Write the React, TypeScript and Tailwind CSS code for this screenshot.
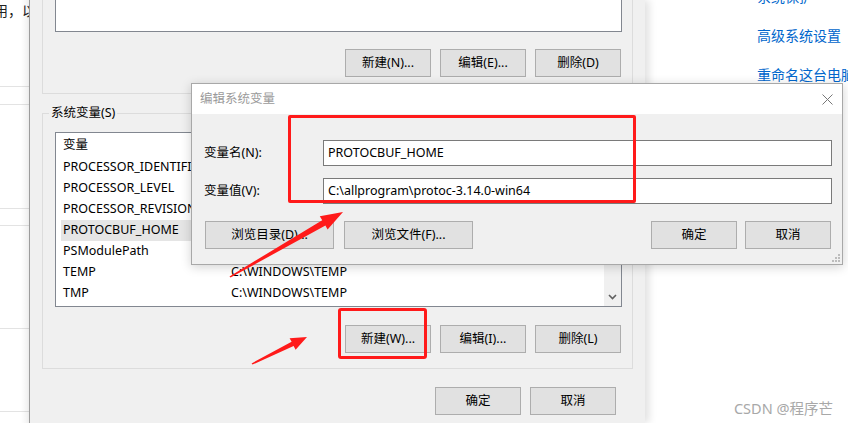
import React from "react";

const font = "font-['Noto_Sans','Noto_Sans_CJK_SC',sans-serif]";

const Btn = ({ w, children }: { w: string; children: React.ReactNode }) => (
  <button
    type="button"
    className={`${w} h-[28px] flex items-center justify-center border border-[#adadad] bg-[#e1e1e1] text-[12.5px] leading-none text-black`}
  >
    {children}
  </button>
);

const rows: [string, string][] = [
  ["PROCESSOR_IDENTIFIER", "Intel64 Family 6 Model 158 Stepping 10, GenuineIntel"],
  ["PROCESSOR_LEVEL", "6"],
  ["PROCESSOR_REVISION", "9e0a"],
  ["PROTOCBUF_HOME", "C:\\allprogram\\protoc-3.14.0-win64"],
  ["PSModulePath", "%ProgramFiles%\\WindowsPowerShell\\Modules"],
  ["TEMP", "C:\\WINDOWS\\TEMP"],
  ["TMP", "C:\\WINDOWS\\TEMP"],
];

const LeftStrip = () => (
  <div className="w-[29px] shrink-0 overflow-hidden bg-white relative">
    <div className="h-[86px] border-b border-[#e3e3e3]">
      <div className="ml-[-20px] mt-[1px] whitespace-nowrap text-[14px] leading-[20px] text-[#222]">使用，以及</div>
    </div>
    <div className="h-[18px] border-b border-[#e3e3e3]" />
    <div className="h-[104px] border-b border-[#e3e3e3]" />
    <div className="h-[17px] border-b border-[#e3e3e3]" />
    <div className="h-[103px] border-b border-[#e3e3e3]" />
    <div className="h-[83px] border-b border-[#e3e3e3]" />
    <div className="absolute inset-y-0 right-0 w-[8px] bg-gradient-to-r from-transparent to-[rgba(0,0,0,0.06)]" />
  </div>
);

const EnvDialog = () => (
  <div className="w-[616px] shrink-0 border-l border-[#9c9c9c] bg-[#f0f0f0] relative z-10 shadow-[4px_0_8px_rgba(0,0,0,0.12)] flex flex-col">
    {/* user variables (cut off at top) */}
    <div className="ml-[12px] w-[591px] h-[94px] border-x border-b border-[#dcdcdc] flex flex-col">
      <div className="ml-[12px] w-[567px] h-[32px] bg-white border-x border-b border-[#828790]" />
      <div className="mt-[17px] flex justify-end gap-[9px] pr-[11px]">
        <Btn w="w-[86px]">新建(N)...</Btn>
        <Btn w="w-[86px]">编辑(E)...</Btn>
        <Btn w="w-[86px]">删除(D)</Btn>
      </div>
    </div>

    {/* system variables */}
    <div className="mt-[19px] ml-[12px] w-[591px] h-[256px] border border-[#dcdcdc] relative flex flex-col">
      <div className="absolute -top-[10px] left-[6px] bg-[#f0f0f0] px-[2px] text-[12.5px] leading-[18px] text-black">系统变量(S)</div>
      <div className="mt-[18px] ml-[12px] w-[567px] h-[175px] bg-white border border-[#828790] flex">
        <div className="flex-1 flex flex-col text-[12.5px] text-black overflow-hidden">
          <div className="h-[24px] flex items-center pl-[7px] shrink-0">
            <div className="w-[168px]">变量</div>
            <div>值</div>
          </div>
          {rows.map(([k, v]) => (
            <div
              key={k}
              className={`h-[21px] shrink-0 ml-[5px] pl-[2px] flex items-center whitespace-nowrap ${k === "PROTOCBUF_HOME" ? "bg-[#e5e5e5]" : ""}`}
            >
              <div className="w-[168px] shrink-0">{k}</div>
              <div>{v}</div>
            </div>
          ))}
        </div>
        <div className="w-[17px] bg-[#f0f0f0] flex flex-col justify-end items-center pb-[6px]">
          <svg width="9" height="6" viewBox="0 0 9 6">
            <path d="M1 1 L4.5 4.5 L8 1" fill="none" stroke="#606060" strokeWidth="1.6" />
          </svg>
        </div>
      </div>
      <div className="mt-[18px] flex justify-end gap-[9px] pr-[11px]">
        <Btn w="w-[86px]">新建(W)...</Btn>
        <Btn w="w-[86px]">编辑(I)...</Btn>
        <Btn w="w-[86px]">删除(L)</Btn>
      </div>
    </div>

    <div className="mt-[18px] flex justify-end gap-[9px] pr-[29px]">
      <Btn w="w-[86px]">确定</Btn>
      <Btn w="w-[86px]">取消</Btn>
    </div>
  </div>
);

const RightPane = () => (
  <div className="flex-1 bg-white pl-[112px] overflow-hidden">
    <div className="mt-[-13px] flex flex-col gap-[19px] text-[14px] leading-[20px] text-[#0066cc] whitespace-nowrap">
      <div>系统保护</div>
      <div>高级系统设置</div>
      <div>重命名这台电脑</div>
    </div>
  </div>
);

const EditDialog = () => (
  <div className="absolute left-[191px] top-[83px] w-[652px] h-[182px] border border-[#a8a8a8] bg-[#f0f0f0] z-20 shadow-[0_2px_10px_rgba(0,0,0,0.18)] flex flex-col">
    <div className="h-[30px] bg-white flex items-center justify-between pl-[8px] pr-[9px] shrink-0">
      <div className="text-[12.5px] text-[#9a9a9a]">编辑系统变量</div>
      <svg width="11" height="11" viewBox="0 0 11 11">
        <path d="M0.5 0.5 L10.5 10.5 M10.5 0.5 L0.5 10.5" stroke="#777" strokeWidth="1" />
      </svg>
    </div>
    <div className="relative flex-1 flex flex-col pt-[26px] pl-[12px] pr-[10px] text-[12.5px] text-black">
      <div className="flex items-center h-[26px]">
        <div className="w-[119px]">变量名(N):</div>
        <div className="flex-1 h-[26px] bg-white border border-[#7a7a7a] flex items-center pl-[4px]">PROTOCBUF_HOME</div>
      </div>
      <div className="mt-[12px] flex items-center h-[26px]">
        <div className="w-[119px]">变量值(V):</div>
        <div className="flex-1 h-[26px] bg-white border border-[#7a7a7a] flex items-center pl-[4px]">
          {"C:\\allprogram\\protoc-3.14.0-win64"}
        </div>
      </div>
      <div className="mt-[17px] flex items-center pl-[1px] pr-[1px]">
        <Btn w="w-[129px]">浏览目录(D)...</Btn>
        <div className="ml-[10px]">
          <Btn w="w-[129px]">浏览文件(F)...</Btn>
        </div>
        <div className="ml-auto flex gap-[8px]">
          <Btn w="w-[86px]">确定</Btn>
          <Btn w="w-[86px]">取消</Btn>
        </div>
      </div>
      <svg className="absolute right-[2px] bottom-[2px]" width="9" height="9" viewBox="0 0 9 9">
        <rect x="7" y="1" width="2" height="2" fill="#bcbcbc" />
        <rect x="4" y="4" width="2" height="2" fill="#bcbcbc" />
        <rect x="7" y="4" width="2" height="2" fill="#bcbcbc" />
        <rect x="1" y="7" width="2" height="2" fill="#bcbcbc" />
        <rect x="4" y="7" width="2" height="2" fill="#bcbcbc" />
        <rect x="7" y="7" width="2" height="2" fill="#bcbcbc" />
      </svg>
    </div>
  </div>
);

const Annotations = () => (
  <>
    <div className="absolute left-[288px] top-[115px] w-[348px] h-[88px] border-[3px] border-[#ff1a1a] rounded-[2px] z-30 pointer-events-none" />
    <div className="absolute left-[338px] top-[308px] w-[89px] h-[51px] border-[3px] border-[#ff1a1a] rounded-[3px] z-30 pointer-events-none" />
    <svg className="absolute left-0 top-0 z-30 pointer-events-none" width="848" height="423" viewBox="0 0 848 423">
      <polygon
        fill="#ff1a1a"
        points="229.5,276.4 322.2,220.2 319.8,216.2 343,212 327.6,229.6 325.4,225.6 230.5,277.6"
      />
      <polygon
        fill="#ff1a1a"
        points="251.6,363.4 291.6,341.8 289.6,338.2 307,337 295.6,349.8 293.6,346 252.4,364.6"
      />
    </svg>
  </>
);

export default function App() {
  return (
    <div className={`relative w-[848px] h-[423px] overflow-hidden bg-white flex ${font}`}>
      <LeftStrip />
      <EnvDialog />
      <RightPane />
      <EditDialog />
      <Annotations />
      <div className="absolute right-[15px] top-[398px] text-[14.5px] leading-[20px] text-[#a8a8a8] z-30">CSDN @程序芒</div>
    </div>
  );
}
